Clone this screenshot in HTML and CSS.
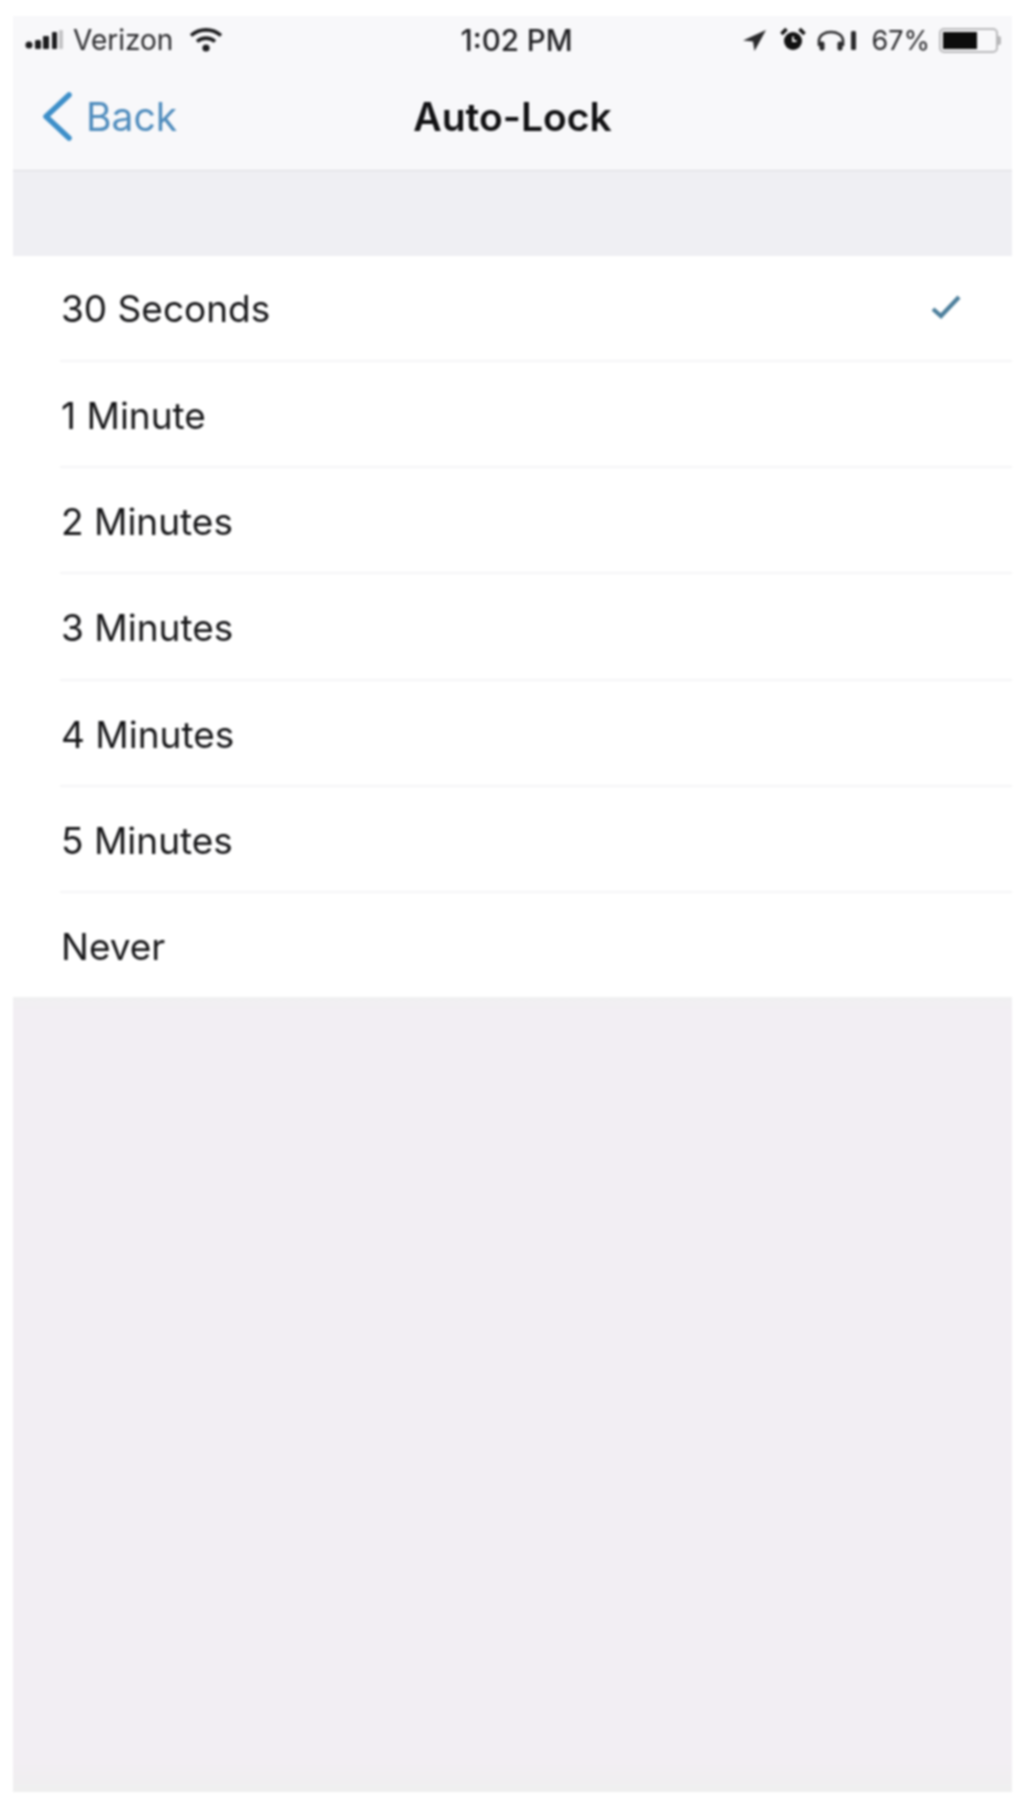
FILE: index.html
```html
<!DOCTYPE html>
<html lang="en">
<head>
    <meta charset="UTF-8">
    <title>Auto-Lock</title>
    <link rel="stylesheet" href="styles.css">
</head>
<body>

<div class="screen">
    <!-- Status bar and nav -->
    <div class="top-bar">
        <div class="status-bar">
            <div class="status-left">
                <svg class="signal" width="42" height="24" viewBox="0 0 42 24">
                    <circle cx="4" cy="17" r="3.500" fill="#1c1c1e"/>
                    <rect x="10" y="12" width="6" height="9" rx="1.500" fill="#1c1c1e"/>
                    <rect x="18" y="8" width="6" height="13" rx="1" fill="#1c1c1e"/>
                    <rect x="27" y="4" width="5" height="17" rx="1" fill="#1c1c1e"/>
                    <rect x="34" y="2" width="4" height="19" rx="1" fill="#c4c4c6"/>
                </svg>
                <span class="carrier">Verizon</span>
                <svg class="wifi" width="34" height="26" viewBox="0 0 34 26">
                    <path d="M2 8.500C10.500 1 23.500 1 32 8.500" fill="none" stroke="#1c1c1e" stroke-width="3.600"/>
                    <path d="M8 14.500C13 10 21 10 26 14.500" fill="none" stroke="#1c1c1e" stroke-width="3.600"/>
                    <circle cx="17" cy="21" r="3.600" fill="#1c1c1e"/>
                </svg>
            </div>
            <div class="status-time">1:02 PM</div>
            <div class="status-right">
                <svg class="arrow" width="26" height="24" viewBox="0 0 26 24">
                    <path d="M25 2 2 12.500l10 1L13.500 23z" fill="#2a2a2c"/>
                </svg>
                <svg class="alarm" width="28" height="28" viewBox="0 0 28 28">
                    <circle cx="14" cy="15" r="9" fill="#111" />
                    <path d="M14 10.500V15h3.500" fill="none" stroke="#f8f8f8" stroke-width="1.800"/>
                    <path d="M2.500 8 7.500 3M25.500 8l-5-5" stroke="#111" stroke-width="3.600"/>
                </svg>
                <svg class="headphones" width="42" height="28" viewBox="0 0 42 28">
                    <path d="M3 20V15C3 3 27 3 27 15V20" fill="none" stroke="#2a2a2c" stroke-width="2.600"/>
                    <rect x="3.500" y="15.500" width="5" height="9" rx="2" fill="#2a2a2c"/>
                    <rect x="21.500" y="15.500" width="5" height="9" rx="2" fill="#2a2a2c"/>
                    <rect x="35" y="5" width="5" height="19" rx="1.500" fill="#2a2a2c"/>
                </svg>
                <span class="battery-pct">67%</span>
                <div class="battery">
                    <div class="battery-body"><div class="battery-fill"></div></div>
                    <div class="battery-cap"></div>
                </div>
            </div>
        </div>

        <div class="nav-bar">
            <div class="back">
                <svg width="32" height="52" viewBox="0 0 32 52">
                    <path d="M29 4 6 25.500 29 47" fill="none" stroke="#3d8fc9" stroke-width="5.500" stroke-linecap="round" stroke-linejoin="round"/>
                </svg>
                <span class="back-label">Back</span>
            </div>
            <div class="nav-title">Auto-Lock</div>
        </div>
    </div>

    <div class="section-gap"></div>

    <!-- Options -->
    <div class="option-list">
        <div class="option">
            <span class="option-label">30 Seconds</span>
            <svg class="check" width="32" height="26" viewBox="0 0 32 26">
                <path d="M3 15 11 22 29 3" fill="none" stroke="#4d7f9c" stroke-width="4.200"/>
            </svg>
        </div>
        <div class="option"><span class="option-label">1 Minute</span></div>
        <div class="option"><span class="option-label">2 Minutes</span></div>
        <div class="option"><span class="option-label">3 Minutes</span></div>
        <div class="option"><span class="option-label">4 Minutes</span></div>
        <div class="option"><span class="option-label">5 Minutes</span></div>
        <div class="option"><span class="option-label">Never</span></div>
    </div>

    <div class="bottom-fill"></div>
</div>

</body>
</html>
```

FILE: styles.css
```css
body {
    margin: 0;
    padding: 16px 12px 13px 13px;
    height: 1805px;
    box-sizing: border-box;
    background-color: #fff;
    font-family: Inter, "Liberation Sans", Arial, sans-serif;
    color: #161618;
}
.screen {
    height: 100%;
    display: flex;
    flex-direction: column;
    filter: blur(0.9px);
}

/* Top bar */
.top-bar {
    height: 154px;
    background-color: #f8f8fa;
    border-bottom: 1px solid #dcdce0;
    flex-shrink: 0;
}
.status-bar {
    height: 48px;
    padding: 0 11px 0 12px;
    display: grid;
    grid-template-columns: 1fr auto 1fr;
    align-items: center;
}
.status-left {
    display: flex;
    align-items: center;
}
.carrier {
    font-size: 28px;
    color: #2a2a2d;
    margin-left: 6px;
}
.wifi {
    margin-left: 16px;
}
.status-time {
    font-size: 29.5px;
    font-weight: 500;
    color: #222225;
    padding-left: 7px;
}
.status-right {
    display: flex;
    align-items: center;
    justify-content: flex-end;
    gap: 9px;
}
.arrow {
    margin-right: 3px;
}
.battery-pct {
    font-size: 27px;
    color: #2a2a2d;
    margin-left: 4px;
}
.battery {
    display: flex;
    align-items: center;
}
.battery-body {
    width: 59px;
    height: 25px;
    box-sizing: border-box;
    border: 2px solid #b8b8ba;
    border-radius: 5px;
    padding: 2px;
}
.battery-fill {
    width: 66%;
    height: 100%;
    background-color: #0c0c0c;
}
.battery-cap {
    width: 3px;
    height: 9px;
    background-color: #b8b8ba;
    border-radius: 0 2px 2px 0;
}
.nav-bar {
    height: 105px;
    display: grid;
    grid-template-columns: 1fr auto 1fr;
    align-items: center;
}
.back {
    display: flex;
    align-items: center;
    padding-left: 27px;
    gap: 14px;
}
.back-label {
    font-size: 39px;
    color: #4f8cbd;
}
.nav-title {
    grid-column: 2;
    font-size: 39px;
    font-weight: 600;
    color: #111113;
}

.section-gap {
    height: 85px;
    flex-shrink: 0;
    background-color: #efeff3;
}

/* Options */
.option-list {
    height: 741px;
    flex-shrink: 0;
    display: grid;
    grid-template-rows: 106px repeat(5, 106.2px) 104px;
    background-color: #fff;
    padding-left: 47px;
}
.option {
    display: flex;
    align-items: center;
    justify-content: space-between;
    border-bottom: 2px solid #f4f4f6;
    padding-right: 50px;
}
.option:first-child {
    padding-bottom: 2px;
}
.option:last-child {
    border-bottom: none;
}
.option-label {
    font-size: 37px;
    margin-left: 1px;
    padding-top: 3px;
}
.bottom-fill {
    flex: 1;
    background: linear-gradient(#f0f0f1, #f2eef3 14px, #f2eef3 calc(100% - 30px), #efefef);
}
```
